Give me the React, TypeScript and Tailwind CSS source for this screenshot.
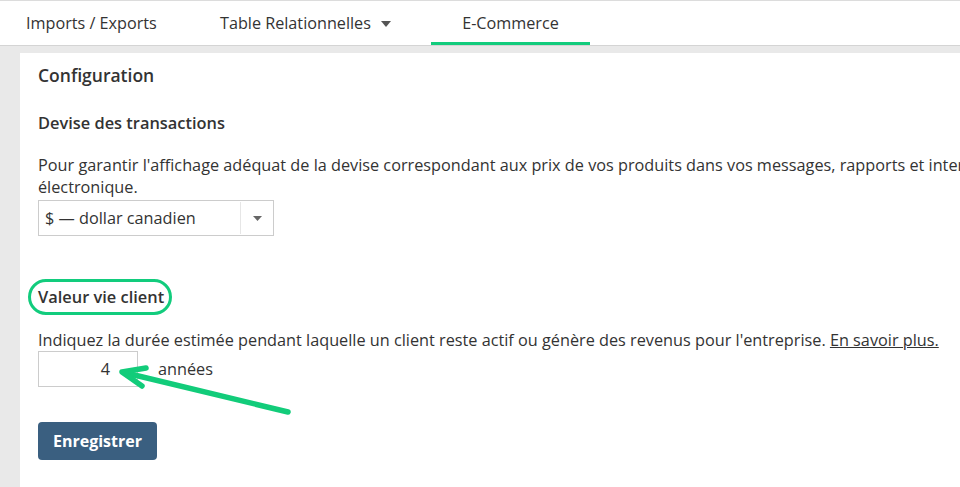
import React from "react";

const tabs = [
  { label: "Imports / Exports", cls: "w-[189px] pl-[26px]" },
  { label: "Table Relationnelles", cls: "w-[242px] pl-[31px]", caret: true },
  { label: "E-Commerce", cls: "w-[159px] justify-center", active: true },
];

export default function App() {
  return (
    <div className="h-[487px] w-[960px] overflow-hidden bg-[#e9e9e9] text-[#333] [font-family:'Open_Sans',sans-serif]">
      <nav className="flex h-[46px] border-t border-b border-t-[#dcdcdc] border-b-[#d4d4d4] bg-white">
        {tabs.map((t) => (
          <div key={t.label} className={`relative flex items-center text-[16.2px] ${t.cls}`}>
            <span>{t.label}</span>
            {t.caret && (
              <svg width="10" height="6" viewBox="0 0 10 6" className="ml-[10px] mt-[2px]">
                <path d="M0 0h10L5 6z" fill="#555" />
              </svg>
            )}
            {t.active && <div className="absolute bottom-0 left-0 right-0 h-[3px] bg-[#12cc7d]" />}
          </div>
        ))}
      </nav>

      <div className="ml-[20px] mt-[7px] h-full bg-white px-[18px] pt-[10px]">
        <h2 className="text-[17.5px] font-semibold leading-[24px]">Configuration</h2>

        <h3 className="mt-[24px] text-[16.4px] font-semibold leading-[24px]">Devise des transactions</h3>
        <p className="mt-[19px] whitespace-nowrap text-[16.25px] leading-[22px]">
          Pour garantir l'affichage adéquat de la devise correspondant aux prix de vos produits dans vos messages, rapports et interfaces de commerce
          <br />
          électronique.
        </p>
        <div className="mt-[2px] flex h-[36px] w-[236px] border border-[#cccccc]">
          <div className="flex flex-1 items-center pl-[6px] text-[16.25px]">$ — dollar canadien</div>
          <div className="my-[1px] w-px bg-[#e6e6e6]" />
          <div className="flex w-[32px] items-center justify-center">
            <svg width="9" height="5" viewBox="0 0 9 5">
              <path d="M0 0h9L4.5 5z" fill="#666" />
            </svg>
          </div>
        </div>

        <div className="relative mt-[49px] inline-block">
          <h3 className="text-[16.4px] font-semibold leading-[24px]">Valeur vie client</h3>
          <div className="absolute left-[-10px] top-[-6px] h-[36px] w-[144px] rounded-full border-[3px] border-[#12cc7d]" />
        </div>
        <p className="mt-[20px] whitespace-nowrap text-[16.25px] leading-[22px]">
          Indiquez la durée estimée pendant laquelle un client reste actif ou génère des revenus pour l'entreprise.{" "}
          <a className="underline">En savoir plus.</a>
        </p>
        <div className="relative flex items-center">
          <div className="flex h-[36px] w-[100px] items-center justify-end border border-[#cccccc] pr-[27px] text-[16.25px]">4</div>
          <span className="ml-[20px] text-[16.25px]">années</span>
          <svg className="absolute left-[40px] top-[10px]" width="220" height="60" viewBox="0 0 220 60">
            <g stroke="#12cc7a" strokeWidth="5.5" strokeLinecap="round" fill="none">
              <path d="M210 51L46 11.5" />
              <path d="M68 7L44 11L64 25" strokeLinejoin="round" />
            </g>
          </svg>
        </div>

        <button className="mt-[35px] flex h-[38px] w-[119px] items-center justify-center rounded-[4px] bg-[#3a5f80] text-[16px] font-bold text-white">
          Enregistrer
        </button>
      </div>
    </div>
  );
}
